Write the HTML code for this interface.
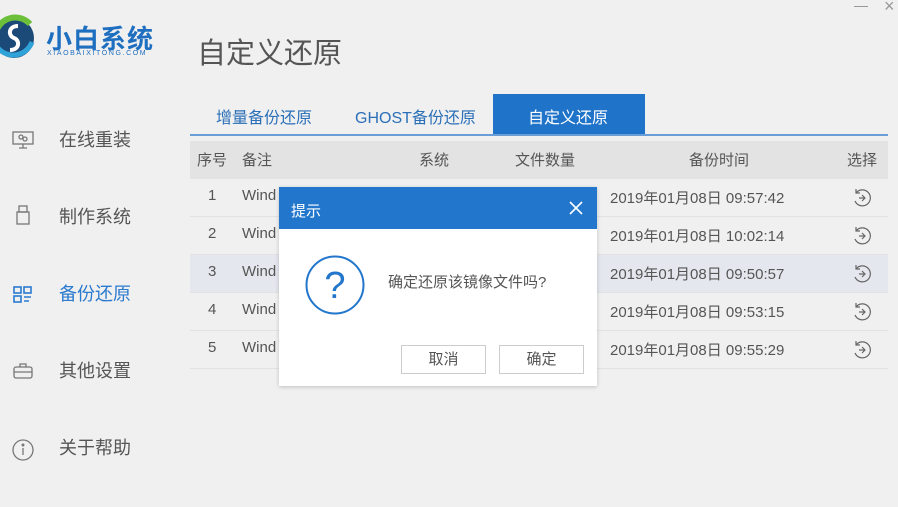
<!DOCTYPE html>
<html><head><meta charset="utf-8"><style>
*{margin:0;padding:0;box-sizing:border-box}
body{width:898px;height:507px;background:#f0f0f0;font-family:"Liberation Sans","Noto Sans CJK SC",sans-serif;position:relative;overflow:hidden;color:#555}
.a{position:absolute;white-space:nowrap}
.nav{font-size:18px;color:#555}
.row{position:absolute;left:190px;width:698px;height:38px;border-bottom:1px solid #e2e2e2;font-size:15px;color:#555}
.row span{position:absolute;top:8px}
</style></head><body>
<!-- logo -->
<svg class="a" style="left:-8px;top:12px" width="44" height="52" viewBox="0 0 44 52">
<circle cx="22" cy="26" r="20" fill="#1c4a78"/>
<path d="M4 20 A20 20 0 0 1 38 12" stroke="#6bbf3a" stroke-width="6" fill="none"/>
<path d="M6 36 A20 20 0 0 0 40 30" stroke="#2fa3d8" stroke-width="5" fill="none"/>
<path d="M26 14 C16 14 16 24 22 26 C28 28 28 38 18 38" stroke="#fff" stroke-width="4" fill="none"/>
</svg>
<div class="a" style="left:46px;top:19px;font-size:26px;font-weight:bold;color:#1f6fc0;letter-spacing:1px">小白系统</div>
<div class="a" style="left:47px;top:50px;font-size:7px;color:#1f6fc0;letter-spacing:1.6px">XIAOBAIXITONG.COM</div>
<div class="a" style="left:197px;top:30px;font-size:29px;color:#555">自定义还原</div>
<div class="a" style="right:30px;top:6px;width:14px;height:1px;background:#999"></div>
<div class="a" style="left:884px;top:-4px;font-size:18px;color:#999">×</div>
<!-- nav -->
<svg class="a" style="left:12px;top:131px" width="22" height="18" viewBox="0 0 22 18" fill="none" stroke="#777" stroke-width="1.3"><rect x="1" y="1" width="20" height="12"/><path d="M11 13v4M7 17h8"/><circle cx="9" cy="6" r="2"/><circle cx="13" cy="8" r="2"/></svg>
<div class="a nav" style="left:59px;top:126px">在线重装</div>
<svg class="a" style="left:16px;top:205px" width="14" height="20" viewBox="0 0 14 20" fill="none" stroke="#777" stroke-width="1.3"><rect x="3" y="1" width="8" height="6"/><rect x="1" y="7" width="12" height="12"/></svg>
<div class="a nav" style="left:59px;top:203px">制作系统</div>
<svg class="a" style="left:13px;top:286px" width="20" height="18" viewBox="0 0 20 18" fill="none" stroke="#2a7ad0" stroke-width="1.6"><rect x="1" y="1" width="7" height="6"/><rect x="11" y="1" width="7" height="6"/><rect x="1" y="10" width="7" height="6"/><path d="M11 11h7M11 15h5"/></svg>
<div class="a nav" style="left:59px;top:280px;color:#2a7ad0">备份还原</div>
<svg class="a" style="left:13px;top:363px" width="20" height="16" viewBox="0 0 20 16" fill="none" stroke="#777" stroke-width="1.3"><rect x="1" y="4" width="18" height="11" rx="2"/><path d="M7 4V1h6v3M1 9h18"/></svg>
<div class="a nav" style="left:59px;top:357px">其他设置</div>
<svg class="a" style="left:12px;top:439px" width="22" height="22" viewBox="0 0 22 22" fill="none" stroke="#777" stroke-width="1.3"><circle cx="11" cy="11" r="10"/><path d="M11 9v7"/><circle cx="11" cy="6" r="0.8" fill="#777"/></svg>
<div class="a nav" style="left:59px;top:434px">关于帮助</div>
<!-- tabs -->
<div class="a" style="left:493px;top:94px;width:152px;height:41px;background:#1f73c8"></div>
<div class="a" style="left:190px;top:134px;width:698px;height:2px;background:#6a9ed6"></div>
<div class="a" style="left:216px;top:104px;font-size:16px;color:#2a6fb8">增量备份还原</div>
<div class="a" style="left:355px;top:104px;font-size:16px;color:#2a6fb8">GHOST备份还原</div>
<div class="a" style="left:528px;top:104px;font-size:16px;color:#fff">自定义还原</div>
<!-- header -->
<div class="a" style="left:190px;top:141px;width:698px;height:38px;background:#e3e3e3"></div>
<div class="a" style="left:197px;top:149px;font-size:15px">序号</div>
<div class="a" style="left:242px;top:149px;font-size:15px">备注</div>
<div class="a" style="left:419px;top:149px;font-size:15px">系统</div>
<div class="a" style="left:515px;top:149px;font-size:15px">文件数量</div>
<div class="a" style="left:689px;top:149px;font-size:15px">备份时间</div>
<div class="a" style="left:847px;top:149px;font-size:15px">选择</div>
<!-- rows -->
<div class="row" style="top:179px"><span style="left:18px">1</span><span style="left:52px">Wind</span><span style="left:420px">2019年01月08日 09:57:42</span></div>
<div class="row" style="top:217px"><span style="left:18px">2</span><span style="left:52px">Wind</span><span style="left:420px">2019年01月08日 10:02:14</span></div>
<div class="row" style="top:255px;background:#e4e8ee"><span style="left:18px">3</span><span style="left:52px">Wind</span><span style="left:420px">2019年01月08日 09:50:57</span></div>
<div class="row" style="top:293px"><span style="left:18px">4</span><span style="left:52px">Wind</span><span style="left:420px">2019年01月08日 09:53:15</span></div>
<div class="row" style="top:331px"><span style="left:18px">5</span><span style="left:52px">Wind</span><span style="left:420px">2019年01月08日 09:55:29</span></div>
<svg width="0" height="0" style="position:absolute"><defs><g id="ri" fill="none" stroke="#666" stroke-width="1.2"><path d="M4 5 A8 8 0 1 1 3 13"/><path d="M4 1v4h4"/><path d="M7 10h6M10 7l3 3-3 3"/></g></defs></svg>
<svg class="a" style="left:852px;top:188px" width="20" height="20"><use href="#ri"/></svg>
<svg class="a" style="left:852px;top:226px" width="20" height="20"><use href="#ri"/></svg>
<svg class="a" style="left:852px;top:264px" width="20" height="20"><use href="#ri"/></svg>
<svg class="a" style="left:852px;top:302px" width="20" height="20"><use href="#ri"/></svg>
<svg class="a" style="left:852px;top:340px" width="20" height="20"><use href="#ri"/></svg>
<!-- dialog -->
<div class="a" style="left:279px;top:187px;width:318px;height:199px;background:#fff;box-shadow:0 1px 4px rgba(0,0,0,.2)"></div>
<div class="a" style="left:279px;top:187px;width:318px;height:42px;background:#2277cc"></div>
<div class="a" style="left:291px;top:200px;font-size:15px;color:#fff">提示</div>
<svg class="a" style="left:569px;top:201px" width="14" height="14" stroke="#fff" stroke-width="1.6"><path d="M1 1L13 13M13 1L1 13"/></svg>
<svg class="a" style="left:305px;top:255px" width="60" height="60"><circle cx="30" cy="30" r="28.5" fill="none" stroke="#2277cc" stroke-width="2"/><text x="30" y="43" text-anchor="middle" font-size="38" fill="#2277cc" font-family="Liberation Sans">?</text></svg>
<div class="a" style="left:388px;top:271px;font-size:15px;color:#555">确定还原该镜像文件吗?</div>
<div class="a" style="left:401px;top:345px;width:85px;height:29px;border:1px solid #ccc;text-align:center;line-height:27px;font-size:15px">取消</div>
<div class="a" style="left:499px;top:345px;width:85px;height:29px;border:1px solid #ccc;text-align:center;line-height:27px;font-size:15px">确定</div>
</body></html>
